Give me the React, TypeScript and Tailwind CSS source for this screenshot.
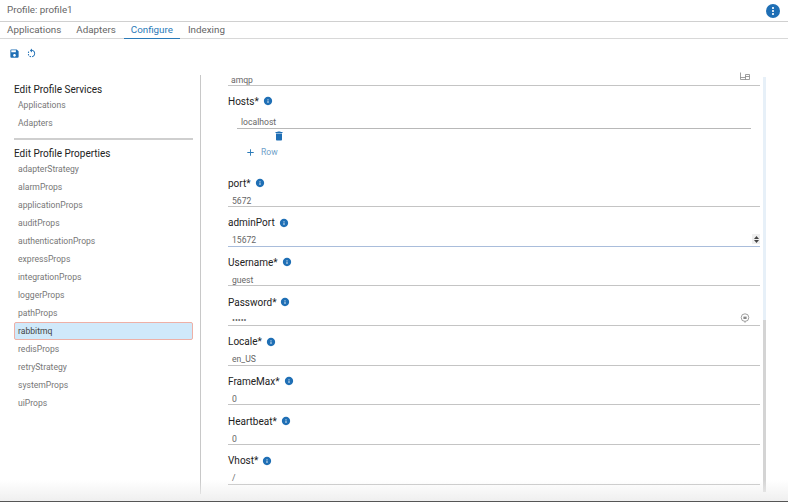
import { MdAdd, MdDelete, MdInfo, MdMoreVert, MdRotateLeft, MdSave } from 'react-icons/md';

const tabs = ['Applications', 'Adapters', 'Configure', 'Indexing'];
const propItems = [
  'adapterStrategy',
  'alarmProps',
  'applicationProps',
  'auditProps',
  'authenticationProps',
  'expressProps',
  'integrationProps',
  'loggerProps',
  'pathProps',
  'rabbitmq',
  'redisProps',
  'retryStrategy',
  'systemProps',
  'uiProps'
];

function Info() {
  return <MdInfo className="ml-[4px] text-[#1f6fb5]" size={10} />;
}

interface FieldProps {
  label: string;
  value: string;
  focused?: boolean;
  children?: React.ReactNode;
}

function Field({ label, value, focused, children }: FieldProps) {
  return (
    <div className="h-[39.7px]">
      <div className="flex h-[18px] items-center text-[10px] text-[#222]">
        {label}
        <Info />
      </div>
      <div
        className={`flex h-[15px] items-center justify-between border-b pl-[4px] pt-[4px] text-[8.6px] text-[#666] ${
          focused ? 'border-[#a9bddb]' : 'border-[#c4c4c4]'
        }`}
      >
        <span>{value}</span>
        {children}
      </div>
    </div>
  );
}

export default function App() {
  return (
    <div className="relative flex h-[502px] w-[788px] flex-col overflow-hidden bg-white font-['Roboto',sans-serif]">
      {/* header */}
      <div className="flex h-[22px] items-center justify-between border-b border-[#d0d0d0] pl-[7px] pr-[8px] text-[9.8px] text-[#666]">
        <span>Profile: profile1</span>
        <span className="flex h-[14px] w-[14px] items-center justify-center rounded-full bg-[#1f6fb5] text-white">
          <MdMoreVert size={12} />
        </span>
      </div>

      {/* tabs */}
      <div className="flex h-[17px] items-stretch gap-[1px] border-b border-[#d8d8d8] text-[9.8px] text-[#666]">
        {tabs.map((t) => (
          <div
            key={t}
            className={`-mb-px flex items-center px-[7px] ${
              t === 'Configure' ? 'border-b border-[#2a7ab8] text-[#2a7ab8]' : ''
            }`}
          >
            {t}
          </div>
        ))}
      </div>

      {/* toolbar */}
      <div className="flex h-[36px] items-center gap-[6px] pl-[9px] pb-[7px] text-[#1f6fb5]">
        <MdSave size={11} />
        <MdRotateLeft size={11} />
      </div>

      <div className="flex min-h-0 flex-1 pb-[8px]">
        {/* left nav */}
        <aside className="ml-[14px] w-[179px] shrink-0 pt-[8px]">
          <h3 className="text-[10px] leading-[14px] text-[#222]">Edit Profile Services</h3>
          <div className="mt-[-1px] text-[8.6px] text-[#777]">
            <div className="flex h-[18px] items-center pl-[4px]">Applications</div>
            <div className="flex h-[18px] items-center pl-[4px]">Adapters</div>
          </div>
          <div className="mt-[6px] h-[2px] bg-[#cfcfcf]" />
          <h3 className="mt-[7px] text-[10px] leading-[14px] text-[#222]">Edit Profile Properties</h3>
          <div className="mt-[-1px] text-[8.6px] text-[#777]">
            {propItems.map((p) => (
              <div
                key={p}
                className={`flex h-[18px] items-center ${
                  p === 'rabbitmq'
                    ? 'rounded-[2px] border border-[#eeb0a6] bg-[#d0e9fa] pl-[3px] text-[#444]'
                    : 'pl-[4px]'
                }`}
              >
                {p}
              </div>
            ))}
          </div>
        </aside>

        {/* divider */}
        <div className="ml-[7px] w-px shrink-0 bg-[#c8c8c8]" />

        {/* form */}
        <div className="ml-[27px] w-[532px] shrink-0">
          <div className="flex h-[11px] items-start justify-between border-b border-[#c4c4c4] pl-[3px] text-[8.6px] leading-[10px] text-[#666]">
            <span>amqp</span>
            <svg className="mr-[10px] mt-[-3px]" width="10" height="8" viewBox="0 0 10 8" fill="none" stroke="#888" strokeWidth="0.8">
              <path d="M0.5 0.5v7h9v-5h-4v5M5.5 4.5h4M0.5 5.5h5" />
            </svg>
          </div>
          <div className="mt-[6px] flex h-[18px] items-center text-[10px] text-[#222]">
            Hosts*
            <Info />
          </div>
          <div className="ml-[9px] mr-[9px] mt-[4px] flex h-[15px] items-center border-b border-[#b8b8b8] pl-[4px] pt-[3px] text-[8.6px] text-[#666]">
            localhost
          </div>
          <div className="ml-[45px] mt-[1px] text-[#1f6fb5]">
            <MdDelete size={12} />
          </div>
          <div className="ml-[17px] mt-[3px] flex h-[14px] items-center gap-[5px] text-[8.6px] text-[#6f9fc9]">
            <MdAdd className="text-[#2a7ab8]" size={11} />
            Row
          </div>
          <div className="mt-[15px]">
            <Field label="port*" value="5672" />
            <Field label="adminPort" value="15672" focused>
              <span className="mb-[3px] flex h-[10px] w-[8px] flex-col items-center justify-center gap-[1px] bg-[#efefef]">
                <svg width="5" height="3" viewBox="0 0 5 3"><path d="M0 3l2.5-3L5 3z" fill="#444" /></svg>
                <svg width="5" height="3" viewBox="0 0 5 3"><path d="M0 0l2.5 3L5 0z" fill="#444" /></svg>
              </span>
            </Field>
            <Field label="Username*" value="guest" />
            <Field label="Password*" value="•••••">
              <svg className="mb-[4px] mr-[10px]" width="10" height="10" viewBox="0 0 10 10" fill="none" stroke="#888" strokeWidth="0.8">
                <circle cx="5" cy="4.6" r="3.8" />
                <rect x="3.4" y="3.6" width="3.2" height="2.4" fill="#888" stroke="none" />
                <path d="M5 8.4v1.4" />
              </svg>
            </Field>
            <Field label="Locale*" value="en_US" />
            <Field label="FrameMax*" value="0" />
            <Field label="Heartbeat*" value="0" />
            <Field label="Vhost*" value="/" />
          </div>
        </div>

        {/* scrollbar */}
        <div className="mb-[2px] ml-[3px] mt-[2px] w-[3px] shrink-0 bg-[#e7f0f8]">
          <div className="mt-[243px] h-[172px] bg-[#d4d4d4]" />
        </div>
      </div>

      {/* bottom edge of the window */}
      <div className="pointer-events-none absolute inset-x-0 bottom-0 h-[22px] border-b border-[#555] bg-gradient-to-b from-transparent to-[#efefef]" />
    </div>
  );
}
